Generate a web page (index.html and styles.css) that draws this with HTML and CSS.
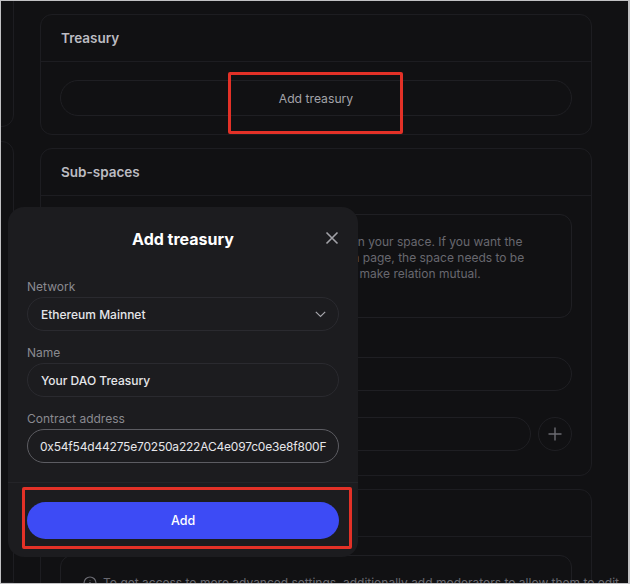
FILE: index.html
```html
<!DOCTYPE html>
<html lang="en">
<head>
<meta charset="utf-8">
<title>Add treasury</title>
<link rel="stylesheet" href="styles.css">
</head>
<body>
<div class="frame">
  <aside class="side">
    <div class="side-card side-card-top"></div>
    <div class="side-card side-card-bottom"></div>
  </aside>

  <main class="main">
    <section class="card">
      <header class="card-head">Treasury</header>
      <div class="card-body">
        <button class="pill-btn">Add treasury</button>
      </div>
    </section>

    <section class="card card-sub">
      <header class="card-head">Sub-spaces</header>
      <div class="card-body">
        <div class="info-box">
          <p class="info-text">Add sub-spaces to show them as child spaces on your space. If you want the<br>sub-space to show your parent space on its own page, the space needs to be<br>added as a parent in the sub-space's settings to make relation mutual.</p>
        </div>
        <label class="field-label hidden-label">Parent</label>
        <div class="ghost-input"></div>
        <div class="add-row">
          <div class="ghost-input grow"></div>
          <button class="round-btn" aria-label="Add">
            <svg width="14" height="14" viewBox="0 0 14 14"><path d="M7 0.5v13M0.5 7h13" stroke="#6b6b72" stroke-width="1.4" fill="none"/></svg>
          </button>
        </div>
      </div>
    </section>

    <section class="card">
      <header class="card-head card-head-empty">Moderators</header>
      <div class="card-body">
        <div class="info-box info-box-low">
          <p class="info-line">
            <svg class="info-icon" width="14" height="14" viewBox="0 0 14 14"><circle cx="7" cy="7" r="6" stroke="#6b6b72" stroke-width="1.2" fill="none"/><path d="M7 6v4M7 4v.6" stroke="#6b6b72" stroke-width="1.3"/></svg>
            To get access to more advanced settings, additionally add moderators to allow them to edit.
          </p>
        </div>
      </div>
    </section>
  </main>

  <div class="modal" role="dialog">
    <div class="modal-head">
      <h2 class="modal-title">Add treasury</h2>
      <button class="close-btn" aria-label="Close">
        <svg width="14" height="14" viewBox="0 0 14 14"><path d="M1.5 1.5l11 11M12.5 1.5l-11 11" stroke="#a2a2a8" stroke-width="1.6" fill="none"/></svg>
      </button>
    </div>
    <div class="modal-form">
      <div class="field">
        <label class="field-label">Network</label>
        <div class="input select">
          <span>Ethereum Mainnet</span>
          <svg width="11" height="7" viewBox="0 0 11 7"><path d="M0.8 0.8l4.7 4.7 4.7-4.7" stroke="#a2a2a8" stroke-width="1.2" fill="none"/></svg>
        </div>
      </div>
      <div class="field">
        <label class="field-label">Name</label>
        <div class="input">Your DAO Treasury</div>
      </div>
      <div class="field">
        <label class="field-label">Contract address</label>
        <div class="input focused"><span class="caret"></span>0x54f54d44275e70250a222AC4e097c0e3e8f800F</div>
      </div>
    </div>
    <div class="modal-foot">
      <button class="primary-btn">Add</button>
    </div>
  </div>

  <div class="mark mark-top"></div>
  <div class="mark mark-bottom"></div>
</div>
</body>
</html>
```

FILE: styles.css
```css
* { box-sizing: border-box; }

html, body {
  margin: 0;
  padding: 0;
  background: #111113;
}

body {
  font-family: Inter, "Noto Sans", "Liberation Sans", sans-serif;
  -webkit-font-smoothing: antialiased;
}

.frame {
  position: relative;
  width: 630px;
  height: 584px;
  border: 1px solid #c2c2c4;
  border-right-width: 2px;
  background: #111113;
  display: flex;
  overflow: hidden;
}

.side {
  width: 14px;
  overflow: hidden;
  display: flex;
  flex-direction: column;
  gap: 14px;
  flex: none;
}

.side-card {
  width: 40px;
  margin-left: -27px;
  border: 1px solid #1d1d21;
}

.side-card-top {
  height: 140px;
  margin-top: -14px;
  border-radius: 0 0 12px 0;
}

.side-card-bottom {
  flex: 1;
  border-radius: 0 12px 0 0;
}

.main {
  margin-left: 25px;
  width: 552px;
  padding-top: 13px;
  display: flex;
  flex-direction: column;
  gap: 13px;
  flex: none;
}

.card {
  border: 1px solid #1d1d21;
  border-radius: 12px;
  flex: none;
}

.card-head {
  height: 47px;
  padding: 0 20px;
  display: flex;
  align-items: center;
  border-bottom: 1px solid #1d1d21;
  color: #bcbcc2;
  font-size: 13.5px;
  font-weight: 600;
}

.card-head-empty {
  color: transparent;
}

.card-body {
  padding: 18px 19px 18px 19px;
}

.card-sub .card-body {
  padding-bottom: 24px;
}

.pill-btn {
  width: 100%;
  height: 36px;
  border: 1px solid #1f1f23;
  border-radius: 18px;
  background: transparent;
  color: #a3a3a9;
  font-family: inherit;
  font-size: 12.2px;
  display: block;
}

.info-box {
  border: 1px solid #1f1f23;
  border-radius: 12px;
  height: 104px;
  padding: 19px 20px 0 22px;
}

.info-text {
  margin: 0;
  color: #68686f;
  font-size: 12px;
  line-height: 16px;
  white-space: nowrap;
}

.field-label {
  display: block;
  color: #8a8a90;
  font-size: 12px;
  line-height: 16px;
}

.hidden-label {
  margin: 14px 0 9px 2px;
}

.ghost-input {
  height: 34px;
  border: 1px solid #1f1f23;
  border-radius: 17px;
}

.add-row {
  display: flex;
  gap: 7px;
  margin-top: 26px;
}

.grow { flex: 1; }

.round-btn {
  width: 34px;
  height: 34px;
  border-radius: 50%;
  border: 1px solid #1f1f23;
  background: transparent;
  display: flex;
  align-items: center;
  justify-content: center;
  padding: 0;
  flex: none;
}

.info-box-low {
  height: 60px;
  padding-top: 19px;
}

.info-line {
  margin: 0;
  display: flex;
  align-items: center;
  gap: 6px;
  color: #68686f;
  font-size: 12px;
  line-height: 16px;
  white-space: nowrap;
}

.info-icon { flex: none; }

/* Modal */
.modal {
  position: absolute;
  left: 7px;
  top: 206px;
  width: 350px;
  height: 350px;
  background: #1c1c1f;
  border-radius: 16px;
  display: flex;
  flex-direction: column;
}

.modal-head {
  position: relative;
  height: 44px;
  padding: 20px 50px 0;
  text-align: center;
}

.modal-title {
  margin: 0;
  font-size: 16px;
  line-height: 24px;
  font-weight: 700;
  color: #ffffff;
}

.close-btn {
  position: absolute;
  right: 19px;
  top: 24px;
  background: none;
  border: 0;
  padding: 0;
  display: flex;
}

.modal-form {
  padding: 28px 19px 19px;
  display: flex;
  flex-direction: column;
  gap: 14px;
}

.field .field-label {
  margin-bottom: 2px;
}

.input {
  height: 34px;
  border: 1px solid #2a2a2f;
  border-radius: 17px;
  padding: 0 13px;
  display: flex;
  align-items: center;
  color: #e6e6ea;
  font-size: 12px;
  font-weight: 500;
  white-space: nowrap;
  overflow: hidden;
}

.select {
  justify-content: space-between;
  padding-right: 12px;
}

.focused {
  border-color: #5c5c62;
  font-weight: 400;
  letter-spacing: -0.2px;
}

.caret {
  display: inline-block;
  width: 1px;
  height: 15px;
  background: #e6e6ea;
  margin-right: -1px;
}

.modal-foot {
  border-top: 1px solid #242428;
  padding: 19px 19px 0;
}

.primary-btn {
  width: 100%;
  height: 37px;
  border: 0;
  border-radius: 19px;
  background: #3d4bf5;
  color: #ffffff;
  font-family: inherit;
  font-size: 12.5px;
  font-weight: 500;
  display: block;
}

/* Annotation boxes */
.mark {
  position: absolute;
  border: 3px solid #e33127;
  border-radius: 2px;
}

.mark-top {
  left: 227px;
  top: 71px;
  width: 175px;
  height: 62px;
}

.mark-bottom {
  left: 21px;
  top: 486px;
  width: 330px;
  height: 62px;
}
```
